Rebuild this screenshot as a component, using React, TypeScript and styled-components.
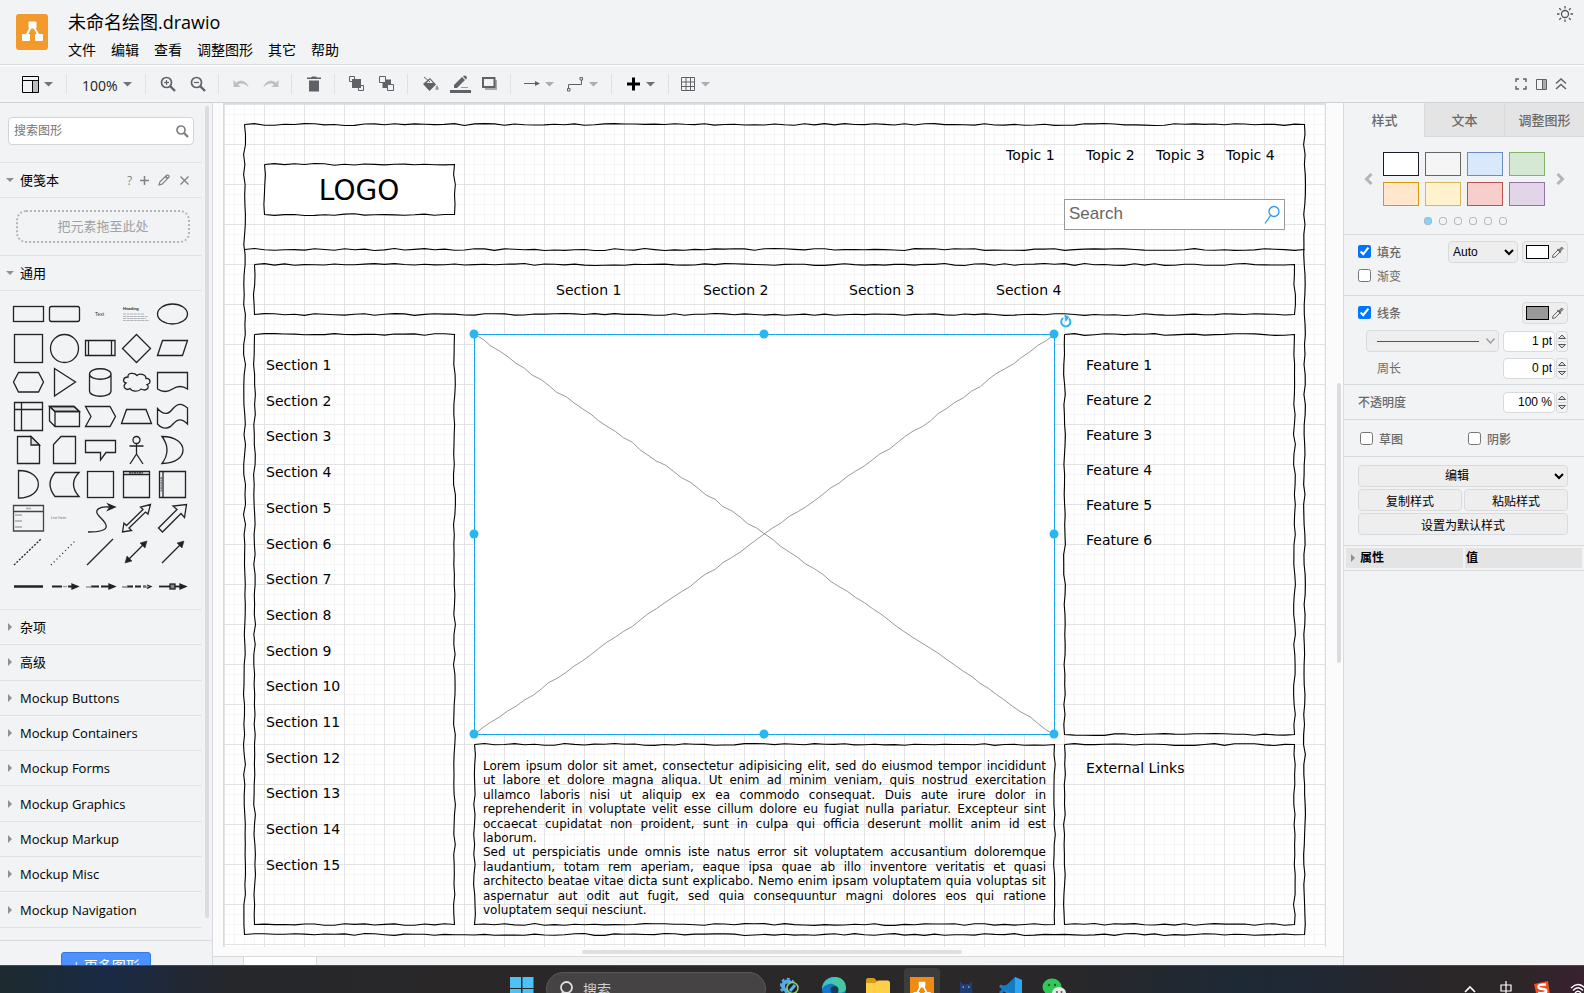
import React from "react";
import styled, { createGlobalStyle, css } from "styled-components";

const UI = `"Open Sans", "Noto Sans CJK SC", sans-serif`;
const ARIAL = `"Liberation Sans", "Noto Sans CJK SC", sans-serif`;
const LINE = "#d8dadd";
const BAR = "#f1f3f4";

const Global = createGlobalStyle`
  *, *::before, *::after { box-sizing: border-box; }
  body { margin: 0; overflow: hidden; font-family: ${UI}; background: ${BAR}; color: #000; }
  button, input, select { font: inherit; margin: 0; }
`;

const Shell = styled.div`
  height: 100vh;
  display: grid;
  grid-template-rows: 66px 37px minmax(0, 1fr) 28px;
`;

/* ---------- header ---------- */
const Header = styled.header`
  display: flex;
  align-items: flex-start;
  gap: 20px;
  padding: 14px 12px 0 16px;
  background: ${BAR};
  border-bottom: 1px solid #fff;
  box-shadow: inset 0 -1px 0 ${LINE};
`;
const AppLogo = styled.svg`
  width: 32px;
  height: 36px;
  flex: none;
`;
const Titles = styled.div`
  flex: 1;
  margin-top: -6px;
`;
const DocTitle = styled.h1`
  margin: 0;
  font-size: 18px;
  line-height: 28px;
  font-weight: 400;
`;
const MenuBar = styled.nav`
  display: flex;
  gap: 15px;
`;
const MenuButton = styled.button`
  padding: 0;
  border: 0;
  background: none;
  font-size: 14px;
  line-height: 28px;
`;
const IconButton = styled.button<{ $w?: number; $h?: number }>`
  display: flex;
  align-items: center;
  justify-content: center;
  width: ${(p) => p.$w ?? 30}px;
  height: ${(p) => p.$h ?? 30}px;
  padding: 0;
  border: 0;
  background: none;
  color: #808386;
  flex: none;
  svg { display: block; }
`;
const ThemeSlot = styled.div`
  margin: -10px -3px 0 0;
`;

/* ---------- toolbar ---------- */
const Toolbar = styled.div`
  display: flex;
  align-items: center;
  padding: 0 13px 0 10px;
  background: ${BAR};
  border-bottom: 1px solid #d0d3d6;
`;
const Group = styled.div<{ $last?: boolean }>`
  display: flex;
  align-items: center;
  height: 20px;
  padding: 0 5px 0 7px;
  border-right: ${(p) => (p.$last ? 0 : 1)}px solid #dfe1e4;
`;
const DropTool = styled(IconButton)`
  justify-content: space-between;
  padding: 0 8px 0 5px;
`;
const ZoomLabel = styled.span`
  font-family: ${UI};
  font-size: 14px;
  color: #222;
  padding: 2px 0 0 3px;
`;
const ToolbarEnd = styled.div`
  display: flex;
  margin-left: auto;
`;

/* ---------- left sidebar ---------- */
const Body = styled.div`
  display: grid;
  grid-template-columns: 213px minmax(0, 1fr) 241px;
  min-height: 0;
`;
const Sidebar = styled.aside`
  display: flex;
  flex-direction: column;
  min-height: 0;
  background: ${BAR};
  border-right: 1px solid ${LINE};
`;
const SidebarScroll = styled.div`
  flex: 1;
  min-height: 0;
  display: flex;
  overflow: hidden;
  justify-content: space-between;
  padding-right: 3px;
`;
const SidebarContent = styled.div`
  width: 202px;
`;
const Thumb = styled.div<{ $top: number; $len: number }>`
  width: 4px;
  height: ${(p) => p.$len}px;
  margin-top: ${(p) => p.$top}px;
  border-radius: 2px;
  background: #dadce0;
`;
const SearchBox = styled.label`
  display: flex;
  align-items: center;
  height: 28px;
  margin: 14px 8px 17px 8px;
  padding: 0 4px 0 5px;
  background: #fff;
  border: 1px solid #d2d4d7;
  border-radius: 4px;
  input {
    flex: 1;
    min-width: 0;
    padding: 0;
    border: 0;
    outline: 0;
    font-size: 12px;
    line-height: 18px;
    background: none;
    &::placeholder { color: #757575; opacity: 1; }
  }
`;
const SectionRow = styled.div`
  display: flex;
  align-items: center;
  height: 35px;
  border-top: 1px solid #e1e3e6;
  padding-right: 8px;
`;
const LibraryList = styled.div`
  display: grid;
  grid-auto-rows: 1fr;
  height: 353px;
  ${SectionRow} { height: auto; }
`;
const SectionTitle = styled.button<{ $medium?: boolean }>`
  flex: 1;
  display: flex;
  align-items: center;
  gap: 6px;
  padding: 0 0 0 6px;
  border: 0;
  background: none;
  font-size: 13px;
  line-height: 20px;
  font-weight: ${(p) => (p.$medium ? 500 : 400)};
  text-align: left;
  white-space: nowrap;
`;
const ScratchTools = styled.div`
  display: flex;
  font-size: 12px;
`;
const ScratchArea = styled.div`
  padding: 12px 12px 12px 16px;
  border-top: 1px solid #e1e3e6;
`;
const DropZone = styled.div`
  height: 33px;
  border: 2px dotted #b4b6b8;
  border-radius: 10px;
  color: #a0a2a4;
  font-size: 13px;
  line-height: 29px;
  text-align: center;
`;
const ShapeGrid = styled.div`
  display: grid;
  grid-template-columns: repeat(5, 36px);
  grid-auto-rows: 34px;
  padding: 6px 10px;
  border-top: 1px solid #e1e3e6;
`;
const ShapeButton = styled.button`
  padding: 0;
  border: 0;
  background: none;
  svg {
    display: block;
    fill: none;
    stroke: #222;
    stroke-width: 1.3;
  }
`;
const SidebarFooter = styled.div`
  flex: none;
  height: 25px;
  overflow: hidden;
  display: flex;
  justify-content: center;
  align-items: flex-start;
  padding-top: 11px;
  border-top: 1px solid ${LINE};
`;
const MoreShapes = styled.button`
  width: 90px;
  height: 28px;
  flex: none;
  padding: 0;
  border: 1px solid #3079ed;
  border-radius: 3px;
  background: #4d90fe;
  color: #fff;
  font-size: 14px;
  line-height: 26px;
`;

/* ---------- canvas ---------- */
const Center = styled.main`
  display: flex;
  flex-direction: column;
  min-width: 0;
  min-height: 0;
  background: #fbfbfb;
`;
const Viewport = styled.div`
  flex: 1;
  min-height: 0;
  display: flex;
  padding: 0 2px 0 10px;
`;
const Page = styled.div`
  position: relative;
  flex: 1;
  min-width: 0;
  overflow: hidden;
  border: solid #dcdcdc;
  border-width: 1px 1px 0;
  background-color: #fff;
  background-image:
    linear-gradient(to right, #e3e3e3 1px, transparent 1px),
    linear-gradient(to bottom, #e3e3e3 1px, transparent 1px),
    linear-gradient(to right, #f6f6f6 1px, transparent 1px),
    linear-gradient(to bottom, #f6f6f6 1px, transparent 1px);
  background-size: 40px 40px, 40px 40px, 10px 10px, 10px 10px;
`;
const VThumb = styled(Thumb)`
  margin-left: 11px;
`;
const HScroll = styled.div`
  height: 9px;
  display: flex;
  justify-content: center;
  align-items: center;
  padding-right: 12px;
  flex: none;
`;
const HThumb = styled.div`
  width: 34%;
  height: 4px;
  border-radius: 2px;
  background: #dfdfdf;
`;
const PageTabs = styled.div`
  flex: none;
  height: 9px;
  padding-left: 30px;
  border-top: 1px solid ${LINE};
  background: ${BAR};
`;
const PageTab = styled.div`
  width: 74px;
  height: 8px;
  background: #fff;
  border: solid ${LINE};
  border-width: 0 1px;
`;
const Strokes = styled.svg`
  position: absolute;
  left: 0;
  top: 0;
  overflow: visible;
  fill: none;
`;
const Label = styled.div<{ $x: number; $y: number }>`
  position: absolute;
  left: ${(p) => p.$x}px;
  top: ${(p) => p.$y}px;
  font-family: "DejaVu Sans", Verdana, sans-serif;
  font-size: 14px;
  line-height: 20px;
  white-space: nowrap;
`;
const LogoLabel = styled(Label)`
  width: 190px;
  text-align: center;
  font-size: 28px;
  line-height: 50px;
`;
const LabelColumn = styled(Label)<{ $h: number }>`
  height: ${(p) => p.$h}px;
  display: flex;
  flex-direction: column;
  justify-content: space-between;
`;
const Paragraph = styled(Label)`
  width: 563px;
  white-space: normal;
  text-align: justify;
  font-size: 12px;
  line-height: 1.2;
  p { margin: 0; }
`;
const MockSearch = styled(Label)`
  display: flex;
  justify-content: space-between;
  width: 221px;
  height: 31px;
  padding: 0 4px;
  border: 1px solid #999;
  background: #fff;
  color: #666;
  font-family: ${ARIAL};
  font-size: 17px;
  line-height: 28px;
`;

/* ---------- format panel ---------- */
const Panel = styled.aside`
  background: ${BAR};
  border-left: 1px solid ${LINE};
  font-family: ${ARIAL};
  font-size: 12px;
  color: #6a6a6a;
  overflow: hidden;
`;
const Tabs = styled.div`
  display: grid;
  grid-template-columns: repeat(3, 1fr);
`;
const Tab = styled.button<{ $active?: boolean }>`
  height: 34px;
  padding: 0;
  border: solid ${LINE};
  border-width: 0 0 1px 1px;
  background: #e4e4e4;
  color: #6a6a6a;
  font-size: 13px;
  font-weight: 500;
  white-space: nowrap;
  ${(p) => p.$active && css`
    background: none;
    border-color: transparent;
  `}
`;
const Section = styled.section<{ $h: number }>`
  height: ${(p) => p.$h}px;
  border-bottom: 1px solid ${LINE};
  padding: 6px 16px 0 14px;
`;
const PresetSection = styled(Section)`
  padding: 15px 14px 0;
`;
const Presets = styled.div`
  display: flex;
  align-items: center;
  justify-content: space-between;
`;
const Swatches = styled.div`
  display: grid;
  grid-template-columns: repeat(4, 36px);
  gap: 6px;
`;
const Swatch = styled.button<{ $fill: string; $line: string }>`
  height: 24px;
  padding: 0;
  border: 1px solid ${(p) => p.$line};
  background: ${(p) => p.$fill};
`;
const Dots = styled.div`
  display: flex;
  justify-content: center;
  gap: 7px;
  padding: 11px 0 0 2px;
`;
const Dot = styled.button<{ $on?: boolean }>`
  width: 8px;
  height: 8px;
  padding: 0;
  border: 1px solid #b5b7b9;
  border-radius: 3px;
  background: ${(p) => (p.$on ? "#80d4ff" : "transparent")};
`;
const Row = styled.div<{ $indent?: number; $gap?: number }>`
  display: flex;
  align-items: center;
  gap: 4px;
  height: 22px;
  padding-left: ${(p) => p.$indent ?? 0}px;
  margin-top: ${(p) => p.$gap ?? 0}px;
`;
const Check = styled.label<{ $w?: number; $bold?: boolean }>`
  display: flex;
  align-items: center;
  gap: 6px;
  width: ${(p) => (p.$w ? `${p.$w}px` : "auto")};
  margin-right: ${(p) => (p.$w ? 0 : "auto")};
  padding-bottom: 2px;
  font-weight: ${(p) => (p.$bold ? 500 : 400)};
  input { width: 13px; height: 13px; }
`;
const FieldName = styled.label<{ $bold?: boolean }>`
  margin-right: auto;
  padding-bottom: 2px;
  font-weight: ${(p) => (p.$bold ? 500 : 400)};
`;
const control = css`
  height: 22px;
  border: 1px solid #d8dadd;
  border-radius: 4px;
  background: #eeeeee;
  color: #000;
  font-size: 12px;
`;
const Select = styled.select<{ $full?: boolean }>`
  ${control}
  width: ${(p) => (p.$full ? "100%" : "70px")};
  padding: 0;
  text-align-last: ${(p) => (p.$full ? "center" : "left")};
`;
const ColorButton = styled.button<{ $c: string }>`
  ${control}
  display: flex;
  align-items: center;
  justify-content: space-between;
  width: 46px;
  padding: 0 3px;
  &::before {
    content: "";
    width: 23px;
    height: 14px;
    border: 1px solid #000;
    background: ${(p) => p.$c};
  }
`;
const LineStyle = styled.button`
  ${control}
  flex: 1;
  display: flex;
  align-items: center;
  justify-content: space-between;
  padding: 0 3px 0 10px;
`;
const Amount = styled.div`
  display: flex;
  gap: 1px;
  input {
    ${control}
    width: 52px;
    height: 21px;
    padding: 0 2px;
    background: #fff;
    font-family: ${ARIAL};
    text-align: right;
  }
`;
const Stepper = styled.div`
  display: flex;
  flex-direction: column;
  width: 12px;
  height: 21px;
  border: 1px solid ${LINE};
  border-radius: 3px;
`;
const Step = styled.button`
  flex: 1;
  display: flex;
  align-items: center;
  justify-content: center;
  padding: 0;
  border: 0;
  background: none;
  & + & { border-top: 1px solid ${LINE}; }
`;
const Action = styled.button`
  ${control}
  flex: 1;
  padding: 0;
`;
const ActionRow = styled.div`
  display: flex;
  gap: 2px;
  margin-top: 2px;
`;
const Properties = styled.table`
  width: 100%;
  border-spacing: 2px;
  border-bottom: 1px solid ${LINE};
  color: #000;
  th {
    height: 20px;
    padding: 0 1px;
    background: #e4e4e4;
    text-align: left;
    font-size: 12px;
    line-height: 18px;
    font-weight: 700;
  }
  th:first-child { width: 117px; }
`;
const PropToggle = styled.button`
  display: flex;
  align-items: center;
  gap: 3px;
  height: 18px;
  padding: 0 0 0 2px;
  border: 0;
  background: none;
`;

/* ---------- taskbar ---------- */
const Taskbar = styled.footer`
  display: flex;
  align-items: flex-start;
  justify-content: space-between;
  overflow: hidden;
  padding-top: 2px;
  border-top: 1px solid #4a4c4e;
  background: linear-gradient(90deg, #1d2a2f 0, #1a2a45 7%, #25272c 14%, #2a2728 30%, #2b2829 60%, #28272a 68%, #1e2936 78%, #1f2835 82%, #292629 90%, #2d2628 96%, #3a2030 100%);
`;
const TaskSide = styled.div`
  flex: 1;
  display: flex;
  justify-content: flex-end;
`;
const TaskApps = styled.div`
  display: flex;
  margin-right: 8px;
`;
const TaskButton = styled.button<{ $active?: boolean }>`
  width: ${(p) => (p.$active ? 36 : 44)}px;
  height: 40px;
  margin: 0 ${(p) => (p.$active ? 4 : 0)}px;
  padding: 9px 0 0;
  display: flex;
  justify-content: center;
  align-items: flex-start;
  border: 0;
  border-radius: 4px;
  background: ${(p) => (p.$active ? "#3d3c3d" : "none")};
`;
const TaskSearch = styled.label`
  display: flex;
  align-items: center;
  gap: 10px;
  width: 220px;
  height: 34px;
  margin: 4px 2px 0;
  padding: 0 12px;
  border: 1px solid #5a5859;
  border-radius: 17px;
  background: #454344;
  input {
    flex: 1;
    min-width: 0;
    padding: 0;
    border: 0;
    outline: 0;
    background: none;
    font-size: 14px;
    &::placeholder { color: #d0d0d0; opacity: 1; }
  }
`;
const TrayButton = styled(TaskButton)`
  width: 36px;
  padding-top: 13px;
  color: #fff;
  &:last-child { margin-right: -12px; }
`;

/* ---------- small drawings ---------- */
const Caret = ({ color = "#707378" }: { color?: string }) => (
  <svg width="9" height="5"><path d="M0 0H9L4.5 4.5Z" fill={color} /></svg>
);
const Fold = ({ open }: { open?: boolean }) => (
  <svg width="8" height="8">
    <path d={open ? "M0 2H8L4 6Z" : "M2 0L6 4L2 8Z"} fill="#8e9093" />
  </svg>
);
const Magnifier = ({ sign }: { sign?: "+" | "-" }) => (
  <svg width="16" height="16" fill="none" stroke="#5f6368">
    <circle cx="6.5" cy="6.5" r="5" strokeWidth="1.7" />
    <path d="M10 10L15 15" strokeWidth="2.4" />
    {sign && <path d="M4 6.5H9" strokeWidth="1.2" />}
    {sign === "+" && <path d="M6.5 4V9" strokeWidth="1.2" />}
  </svg>
);
const Bend = ({ flip }: { flip?: boolean }) => (
  <svg width="16" height="10">
    <g transform={flip ? "matrix(-1 0 0 1 16 0)" : undefined}>
      <path d="M0.500 1V8H7.500L5 5.500C8 3.500 12 4 15.500 8.500C14 2 7.500 0 3.200 3.700Z" fill="#bdc0c3" />
    </g>
  </svg>
);
const Dropper = () => (
  <svg width="13" height="13" fill="none" stroke="#666" strokeWidth="1">
    <path d="M7 4L2 9L1.500 11.500L4 11L9 6Z" />
    <path d="M6.500 3L10 6.500" strokeWidth="1.300" />
    <path d="M8 4.500L9.500 2Q11.500 0.500 12 2.500L9.500 5Z" fill="#999" />
  </svg>
);
const Pencil = () => (
  <svg width="12" height="12" fill="none" stroke="#808386" strokeWidth="1.200">
    <path d="M1 11L1.800 8L8.500 1.300Q10 0.500 11 2Q11.500 3 10.500 3.700L4 10.200Z" />
    <path d="M7.500 2.500L9.500 4.500" strokeWidth="1.800" />
  </svg>
);
const Angle = ({ right }: { right?: boolean }) => (
  <svg width="9" height="12" fill="none" stroke="#b3b5b7" strokeWidth="3">
    <path d={right ? "M1.500 1L6.500 6L1.500 11" : "M7.500 1L2.500 6L7.500 11"} />
  </svg>
);

const Drawio = ({ small }: { small?: boolean }) => (
  <AppLogo
    as="svg"
    viewBox={small ? "2 2 29 30" : "0 0 32 36"}
  >
    <rect width="32" height="36" rx="3" fill={small ? "#f08a10" : "#f29a2b"} />
    <path d="M15 13L10 22M18 13L23 22" stroke="#fff" strokeWidth="2" />
    <rect x="12.500" y="7.500" width="8" height="7" rx="1" fill="#fff" />
    <rect x="6" y="20" width="8" height="7" rx="1" fill="#fff" />
    <rect x="19" y="20" width="8" height="7" rx="1" fill="#fff" />
  </AppLogo>
);
const TaskDrawio = styled.span`
  display: flex;
  ${AppLogo} { width: 24px; height: 25px; }
`;

const tiny = { stroke: "none", fill: "#333", fontFamily: "Liberation Sans", fontSize: 5 } as const;
const shapes: [string, React.ReactNode][] = [
  ["Rectangle", <rect x="3.500" y="9.500" width="30" height="15" />],
  ["Rounded Rectangle", <rect x="3.500" y="9.500" width="30" height="15" rx="2" />],
  ["Text", <text x="13" y="19" {...tiny} fontSize={5}>Text</text>],
  ["Textbox", <g><text x="5" y="13" {...tiny} fontSize={4} fontWeight="700" fill="#134">Heading</text><path d="M5 17H26M5 19.500H30M5 21.500H28M5 23.500H31" stroke="#9a9aa5" strokeWidth=".7" strokeDasharray="3 .6" /></g>],
  ["Ellipse", <ellipse cx="18.500" cy="17" rx="15" ry="10" />],
  ["Square", <rect x="4.500" y="3.500" width="28" height="28" />],
  ["Circle", <circle cx="18.500" cy="17.500" r="14" />],
  ["Process", <path d="M3.500 9.500H33V24.500H3.500ZM6.500 9.500V24.500M29.500 9.500V24.500" />],
  ["Diamond", <path d="M18.500 3.500L32.500 17.500L18.500 31.500L4.500 17.500Z" />],
  ["Parallelogram", <path d="M3.500 24.500L8.500 9.500H33.500L28.500 24.500Z" />],
  ["Hexagon", <path d="M3.500 17L8.500 7.500H28.500L33.500 17L28.500 27H8.500Z" />],
  ["Triangle", <path d="M8.500 3.500L29.500 17L8.500 31Z" />],
  ["Cylinder", <path d="M7.500 9C7.500 2 29 2 29 9V26C29 33 7.500 33 7.500 26ZM7.500 9C7.500 16 29 16 29 9" />],
  ["Cloud", <path d="M10 12C5 12 4 17 8 18C3 22 9 26 12 23.500C14 27 21 27 23 24C29 27 32 22 29 19.500C34 18 32 13 28 13.500C28 9 21 8 19 10.500C16 7 9 8 10 12Z" />],
  ["Document", <path d="M3.500 7.500H33.500V24Q26 19 18.500 24T3.500 24Z" />],
  ["Internal Storage", <path d="M4.500 3.500H32.500V31.500H4.500ZM11.500 3.500V31.500M4.500 10.500H32.500" />],
  ["Cube", <g><path d="M3.500 7.500H28L33.500 12.500H9Z" fill="#ddd" /><path d="M3.500 7.500H28L33.500 12.500V27.500H9L3.500 22ZM3.500 7.500L9 12.500V27.500M9 12.500H33.500" /></g>],
  ["Step", <path d="M3.500 7.500H28L33.500 17.500L28 27.500H3.500L9 17.500Z" />],
  ["Trapezoid", <path d="M3.500 24.500L8.500 10.500H28L33.500 24.500Z" />],
  ["Tape", <path d="M3.500 9.500C10 17 15 15 19 9.500C24 4 28 4 33.500 9V25C28 19.500 24 19.500 19 25C15 30 9 31 3.500 25Z" />],
  ["Note", <g><path d="M7.500 3.500H21L29.500 12V30.500H7.500Z" /><path d="M21 3.500V12H29.500Z" fill="#ddd" /></g>],
  ["Card", <path d="M15 3.500H29.500V30.500H7.500V11.500Z" />],
  ["Callout", <path d="M3.500 7.500H33.500V19.500H24L18.500 27V19.500H3.500Z" />],
  ["Actor", <path d="M18.500 10V21M11.500 13H25.500M18.500 21L12 31M18.500 21L25 31M22 7A3.500 3.500 0 1 1 15 7A3.500 3.500 0 1 1 22 7" />],
  ["Or", <path d="M8 3.500C36 3.500 36 30.500 8 30.500Q18 17 8 3.500Z" />],
  ["And", <path d="M8.500 3.500C35 3.500 35 31 8.500 31Z" />],
  ["Data Storage", <path d="M9 5.500H33Q22 17 33 29.500H9Q-1 17 9 5.500Z" />],
  ["Container", <rect x="5.500" y="4.500" width="26" height="26" />],
  ["Vertical Container", <g><path d="M5.500 4.500H31.500V30.500H5.500ZM5.500 7.500H31.500" /><path d="M11 5.800H25" strokeDasharray="2 .5" /></g>],
  ["Horizontal Container", <g><path d="M5.500 4.500H31.500V30.500H5.500ZM9 4.500V30.500" /><path d="M7.200 10V25" stroke="#668" strokeDasharray="2 .5" /></g>],
  ["List", <g stroke="#444"><path d="M3.500 4.500H33.500V30H3.500ZM3.500 10.500H33.500" /><path d="M16 7.500H21M5 14H12M5 20H12M5 26H12" stroke="#aaa" /></g>],
  ["List Item", <text x="5" y="18" {...tiny} fontSize={4} fill="#777">List Item</text>],
  ["Curve", <g><path d="M6 31C35 31 22 20 17 15C11 9 18 5 27 6" /><path d="M26 3L33 6L26 9L28 6Z" fill="#222" /></g>],
  ["Bidirectional Arrow", <path d="M4.500 31L6 22L8.500 24.500L25 8.500L22.500 6L32.500 3.500L30 13L27.500 11L11 27L13.500 29.500Z" />],
  ["Arrow", <path d="M4.500 27L23 8.500L19 5L32.500 3.500L30.500 16.500L27 12.500L8.500 31Z" />],
  ["Dashed Line", <path d="M4 30L31 4" strokeDasharray="2 1.500" />],
  ["Dotted Line", <path d="M5 30L30 5" strokeDasharray="1 3" />],
  ["Line", <path d="M5 30L31 4" />],
  ["Bidirectional Connector", <g><path d="M9 26L27 8" /><path d="M7 28L9 21L14 26ZM29 6L27 13L22 8Z" fill="#222" strokeWidth=".5" /></g>],
  ["Directional Connector", <g><path d="M8 28L27 9" /><path d="M30 6L28 13L23 8Z" fill="#222" strokeWidth=".5" /></g>],
  ["Link", <path d="M4 17.500H33" strokeWidth="2.500" />],
  ["Connector with Label", <g><path d="M6 17.500H16M22 17.500H28" strokeWidth="1.800" /><path d="M17 17.500H21" stroke="#999" /><path d="M26 15L32 17.500L26 20Z" fill="#222" /></g>],
  ["Connector with 2 Labels", <g><path d="M9 17.500H28" strokeWidth="1.800" strokeDasharray="8 2" /><path d="M4 18H10" stroke="#888" /><path d="M27 15L33 17.500L27 20Z" fill="#222" /></g>],
  ["Connector with 3 Labels", <g><path d="M9 17.500H28" strokeWidth="1.800" strokeDasharray="6 2" /><path d="M4 18H10M25 18H32" stroke="#888" /><path d="M29 16L33 17.500L29 19.500" /></g>],
  ["Connector with Symbol", <g><path d="M5 17.500H28" strokeWidth="1.800" /><rect x="16" y="15" width="5" height="5" fill="#888" /><path d="M26 15L32 17.500L26 20Z" fill="#222" /></g>],
];

/* Hand-drawn outline: each side is cut into short steps that drift off the straight line. */
function wobble(points: [number, number][], seed: number) {
  let s = seed;
  const rnd = () => {
    s = (s * 16807) % 2147483647;
    return s / 2147483647;
  };
  let d = `M${points[0][0]} ${points[0][1]}`;
  for (let i = 1; i < points.length; i++) {
    const [x0, y0] = points[i - 1];
    const [x1, y1] = points[i];
    const len = Math.hypot(x1 - x0, y1 - y0);
    const n = Math.max(2, Math.round(len / 10));
    const nx = -(y1 - y0) / len;
    const ny = (x1 - x0) / len;
    for (let k = 1; k < n; k++) {
      const off = (rnd() - 0.5) * 2;
      d += `L${(x0 + ((x1 - x0) * k) / n + nx * off).toFixed(1)} ${(y0 + ((y1 - y0) * k) / n + ny * off).toFixed(1)}`;
    }
    d += `L${x1} ${y1}`;
  }
  return d;
}
const box = (x: number, y: number, w: number, h: number, seed: number) =>
  wobble([[x, y], [x + w, y], [x + w, y + h], [x, y + h], [x, y]], seed);

const frames = [
  box(20.5, 20.5, 1060, 810, 4211),
  wobble([[20.5, 145.5], [1080.5, 145.5]], 917),
  box(30.5, 160.5, 1040, 50, 7753),
  box(30.5, 230.5, 200, 590, 3391),
  box(840.5, 230.5, 230, 400, 6127),
  box(250.5, 640.5, 580, 180, 2719),
  box(840.5, 640.5, 230, 180, 9241),
];
const handles = [250, 540, 830].flatMap((x) => [230, 430, 630].map((y) => [x, y])).filter(([x, y]) => !(x === 540 && y === 430));

const presets = [
  ["#ffffff", "#1a1a28"], ["#f5f5f5", "#666666"], ["#dae8fc", "#6c8ebf"], ["#d5e8d4", "#82b366"],
  ["#ffe6cc", "#d79b00"], ["#fff2cc", "#d6b656"], ["#f8cecc", "#b85450"], ["#e1d5e7", "#9673a6"],
];
const cjkLibraries = ["杂项", "高级"];
const mockLibraries = ["Buttons", "Containers", "Forms", "Graphics", "Markup", "Misc", "Navigation", "Text"];
const count = (name: string, n: number) => Array.from({ length: n }, (_, i) => `${name} ${i + 1}`);

const AmountField = ({ id, value, label }: { id: string; value: string; label: string }) => (
  <Amount>
    <input id={id} aria-label={label} defaultValue={value} />
    <Stepper>
      <Step aria-label="增加"><svg width="8" height="5" fill="#ddd" stroke="#555"><path d="M.5 4.500L4 1L7.500 4.500Z" /></svg></Step>
      <Step aria-label="减少"><svg width="8" height="5" fill="#ddd" stroke="#555"><path d="M.5 .5L4 4L7.500 .5Z" /></svg></Step>
    </Stepper>
  </Amount>
);

function HeaderBar() {
  return (
    <Header>
      <Drawio />
      <Titles>
        <DocTitle>未命名绘图.drawio</DocTitle>
        <MenuBar>
          {["文件", "编辑", "查看", "调整图形", "其它", "帮助"].map((m) => <MenuButton key={m}>{m}</MenuButton>)}
        </MenuBar>
      </Titles>
      <ThemeSlot>
        <IconButton $w={20} $h={20} aria-label="外观">
          <svg width="18" height="18" fill="none" stroke="#555" strokeWidth="1.300">
            <circle cx="9" cy="9" r="3.500" />
            <path d="M9 1V3.500M9 14.500V17M1 9H3.500M14.500 9H17M3.300 3.300L5 5M13 13L14.700 14.700M3.300 14.700L5 13M13 5L14.700 3.300" />
          </svg>
        </IconButton>
      </ThemeSlot>
    </Header>
  );
}

function ToolbarRow() {
  return (
    <Toolbar>
      <Group>
        <DropTool $w={44} aria-label="视图">
          <svg width="17" height="17" fill="none" stroke="#000"><path d="M11 5H16V16H11Z" fill="#bbb" stroke="none" /><path d="M.5 .5H16.500V16.500H.5ZM.5 4.500H16.500M10.500 4.500V16.500" /></svg>
          <Caret />
        </DropTool>
      </Group>
      <Group>
        <DropTool $w={66} aria-label="缩放"><ZoomLabel>100%</ZoomLabel><Caret /></DropTool>
      </Group>
      <Group>
        <IconButton aria-label="放大"><Magnifier sign="+" /></IconButton>
        <IconButton aria-label="缩小"><Magnifier sign="-" /></IconButton>
      </Group>
      <Group>
        <IconButton aria-label="撤销"><Bend /></IconButton>
        <IconButton aria-label="重做"><Bend flip /></IconButton>
      </Group>
      <Group>
        <IconButton aria-label="删除"><svg width="14" height="16" fill="#5f6368"><path d="M0 1.500H4L5 .5H9L10 1.500H14V3H0ZM2 4.500H12V15.500H2Z" /></svg></IconButton>
      </Group>
      <Group>
        <IconButton aria-label="置于前面"><svg width="16" height="16" fill="none" stroke="#5f6368"><path d="M3 3H12V12H3Z" fill="#5f6368" stroke="none" /><path d="M5.500 .5H.5V5.500H3M5.500 .5V3M9.500 12V14.500H14.500V9.500H12" /></svg></IconButton>
        <IconButton aria-label="置于后面"><svg width="16" height="16" fill="none" stroke="#5f6368"><path d="M3.500 3.500H12V12H3.500Z" fill="#5f6368" stroke="none" /><path d="M.5 .5H6.500V6.500H.5ZM8.500 8.500H14.500V14.500H8.500Z" fill="#f1f3f4" /></svg></IconButton>
      </Group>
      <Group>
        <IconButton aria-label="填充颜色"><svg width="17" height="16" fill="#5f6368"><path d="M1 8L8 2L14 8.500L7.500 15Z" /><path d="M4.500 7L8 3.500L11 7Z" fill="#f1f3f4" /><path d="M2 1L8 6" stroke="#5f6368" /><path d="M15 9Q18.500 14 15 14T15 9Z" opacity=".6" /></svg></IconButton>
        <IconButton aria-label="线条颜色"><svg width="21" height="18" fill="#5f6368"><path d="M4 13V10L12 2L15 5L7 13ZM13 1.500Q14.500 -.5 16.500 1.500Q17.500 3 16 4.500Z" /><path d="M11 12H18V13H11Z" opacity=".6" /><path d="M0 15H21V18H0Z" /></svg></IconButton>
        <IconButton aria-label="阴影"><svg width="16" height="14"><path d="M3 3H15V13H3Z" fill="#aaa" /><path d="M1 1H12.500V10H1Z" fill="#f1f3f4" stroke="#5f6368" strokeWidth="2" /></svg></IconButton>
      </Group>
      <Group>
        <DropTool $w={44} aria-label="连接"><svg width="17" height="10"><path d="M1 4.500H14" stroke="#5f6368" /><path d="M12 2L17 4.500L12 7Z" fill="#5f6368" /></svg><Caret color="#aaacaf" /></DropTool>
        <DropTool $w={44} aria-label="航点"><svg width="16" height="16" fill="none" stroke="#5f6368"><path d="M1.500 13V8.500H14.500V4M.5 12.500H3V15H.5ZM13 1.500H15.500V4H13Z" /></svg><Caret color="#aaacaf" /></DropTool>
      </Group>
      <Group>
        <DropTool $w={44} aria-label="插入"><svg width="17" height="14"><path d="M9.500 .5V13.500M3 7H16" stroke="#000" strokeWidth="3" /></svg><Caret /></DropTool>
      </Group>
      <Group $last>
        <DropTool $w={42} aria-label="表格"><svg width="14" height="14" fill="none" stroke="#5f6368"><path d="M.5 .5H13.500V13.500H.5ZM.5 5H13.500M.5 9.500H13.500M5 .5V13.500M9.500 .5V13.500" /></svg><Caret color="#aaacaf" /></DropTool>
      </Group>
      <ToolbarEnd>
        <IconButton $w={20} aria-label="全屏"><svg width="12" height="12" fill="none" stroke="#5f6368" strokeWidth="1.500"><path d="M1 4V1H4M8 1H11V4M11 8V11H8M4 11H1V8" /></svg></IconButton>
        <IconButton $w={20} aria-label="格式"><svg width="11" height="11"><path d="M7 1H10V10H7Z" fill="#aaa" /><path d="M.5 .5H10.500V10.500H.5ZM6.500 .5V10.500" fill="none" stroke="#5f6368" /></svg></IconButton>
        <IconButton $w={20} aria-label="收起"><svg width="12" height="12" fill="none" stroke="#5f6368" strokeWidth="1.500"><path d="M1 5.500L6 1L11 5.500M1 11L6 6.500L11 11" /></svg></IconButton>
      </ToolbarEnd>
    </Toolbar>
  );
}

function ShapeSidebar() {
  return (
    <Sidebar>
      <SidebarScroll>
        <SidebarContent>
          <SearchBox>
            <input placeholder="搜索图形" aria-label="搜索图形" />
            <svg width="13" height="13" fill="none" stroke="#7d8084"><circle cx="5" cy="5" r="4" strokeWidth="1.700" /><path d="M8 8L12 12" strokeWidth="2.400" /></svg>
          </SearchBox>
          <SectionRow>
            <SectionTitle><Fold open />便笺本</SectionTitle>
            <ScratchTools>
              <IconButton $w={9} $h={20}>?</IconButton>
              <IconButton $w={20} $h={20} aria-label="添加"><svg width="9" height="9"><path d="M4.500 0V9M0 4.500H9" stroke="#808386" strokeWidth="1.500" /></svg></IconButton>
              <IconButton $w={20} $h={20} aria-label="编辑"><Pencil /></IconButton>
              <IconButton $w={20} $h={20} aria-label="关闭"><svg width="9" height="9"><path d="M.5 .5L8.500 8.500M8.500 .5L.5 8.500" stroke="#808386" strokeWidth="1.300" /></svg></IconButton>
            </ScratchTools>
          </SectionRow>
          <ScratchArea><DropZone>把元素拖至此处</DropZone></ScratchArea>
          <SectionRow><SectionTitle><Fold open />通用</SectionTitle></SectionRow>
          <ShapeGrid>
            {shapes.map(([name, art]) => (
              <ShapeButton key={name} aria-label={name}><svg width="36" height="34">{art}</svg></ShapeButton>
            ))}
          </ShapeGrid>
          <LibraryList>
            {cjkLibraries.map((l) => (
              <SectionRow key={l}><SectionTitle><Fold />{l}</SectionTitle></SectionRow>
            ))}
            {mockLibraries.map((l) => (
              <SectionRow key={l}><SectionTitle $medium><Fold />Mockup {l}</SectionTitle></SectionRow>
            ))}
          </LibraryList>
        </SidebarContent>
        <Thumb $top={3} $len={812} />
      </SidebarScroll>
      <SidebarFooter><MoreShapes>+ 更多图形</MoreShapes></SidebarFooter>
    </Sidebar>
  );
}

function Diagram() {
  return (
    <Page>
      <Strokes width="1100" height="840">
        <g stroke="#000" strokeWidth="1.100">
          {frames.map((d, i) => <path key={i} d={d} />)}
          <path d={box(40.5, 60.5, 190, 50, 5417)} fill="#fff" />
        </g>
        <rect x="250.500" y="230.500" width="580" height="400" fill="#fff" stroke="#999" />
        <g stroke="#999">
          <path d={wobble([[250.5, 230.5], [830.5, 630.5]], 613)} />
          <path d={wobble([[250.5, 630.5], [830.5, 230.5]], 829)} />
        </g>
      </Strokes>
      <LogoLabel $x={40} $y={62}>LOGO</LogoLabel>
      {[782, 862, 932, 1002].map((x, i) => <Label key={x} $x={x} $y={41}>Topic {i + 1}</Label>)}
      {[332, 479, 625, 772].map((x, i) => <Label key={x} $x={x} $y={176}>Section {i + 1}</Label>)}
      <MockSearch $x={840} $y={95}>
        Search
        <svg width="16" height="29" fill="none" stroke="#2a97f5" strokeWidth="1.300"><circle cx="10" cy="11.500" r="5" /><path d="M6.500 15.500L1 23.500" /></svg>
      </MockSearch>
      <LabelColumn $x={42} $y={251} $h={520}>{count("Section", 15).map((t) => <span key={t}>{t}</span>)}</LabelColumn>
      <LabelColumn $x={862} $y={251} $h={195}>{count("Feature", 6).map((t) => <span key={t}>{t}</span>)}</LabelColumn>
      <Paragraph $x={259} $y={655}>
        <p>Lorem ipsum dolor sit amet, consectetur adipisicing elit, sed do eiusmod tempor incididunt ut labore et dolore magna aliqua. Ut enim ad minim veniam, quis nostrud exercitation ullamco laboris nisi ut aliquip ex ea commodo consequat. Duis aute irure dolor in reprehenderit in voluptate velit esse cillum dolore eu fugiat nulla pariatur. Excepteur sint occaecat cupidatat non proident, sunt in culpa qui officia deserunt mollit anim id est laborum.</p>
        <p>Sed ut perspiciatis unde omnis iste natus error sit voluptatem accusantium doloremque laudantium, totam rem aperiam, eaque ipsa quae ab illo inventore veritatis et quasi architecto beatae vitae dicta sunt explicabo. Nemo enim ipsam voluptatem quia voluptas sit aspernatur aut odit aut fugit, sed quia consequuntur magni dolores eos qui ratione voluptatem sequi nesciunt.</p>
      </Paragraph>
      <Label $x={862} $y={654}>External Links</Label>
      <Strokes width="1100" height="840">
        <rect x="250.500" y="230.500" width="580" height="400" stroke="#00a8ff" strokeDasharray="6 1" />
        <g fill="#29b6f2">{handles.map(([x, y]) => <circle key={`${x}-${y}`} cx={x} cy={y} r="4.500" />)}</g>
        <path d="M839.200 214A4.600 4.600 0 1 0 845 214.500" stroke="#29b6f2" strokeWidth="2" />
        <path d="M840.500 210.500L845.500 213L841.500 218Z" fill="#29b6f2" />
      </Strokes>
    </Page>
  );
}

function FormatPanel() {
  return (
    <Panel>
      <Tabs><Tab $active>样式</Tab><Tab>文本</Tab><Tab>调整图形</Tab></Tabs>
      <PresetSection $h={98}>
        <Presets>
          <IconButton $w={20} aria-label="上一页"><Angle /></IconButton>
          <Swatches>{presets.map(([f, l]) => <Swatch key={f} $fill={f} $line={l} aria-label={f} />)}</Swatches>
          <IconButton $w={20} aria-label="下一页"><Angle right /></IconButton>
        </Presets>
        <Dots>{[1, 2, 3, 4, 5, 6].map((n) => <Dot key={n} $on={n === 1} aria-label={`${n}`} />)}</Dots>
      </PresetSection>
      <Section $h={61}>
        <Row>
          <Check $bold><input type="checkbox" defaultChecked />填充</Check>
          <Select aria-label="填充样式"><option>Auto</option></Select>
          <ColorButton $c="#fff" aria-label="填充颜色"><Dropper /></ColorButton>
        </Row>
        <Row $gap={2}><Check><input type="checkbox" />渐变</Check></Row>
      </Section>
      <Section $h={89}>
        <Row>
          <Check $bold><input type="checkbox" defaultChecked />线条</Check>
          <ColorButton $c="#999" aria-label="线条颜色"><Dropper /></ColorButton>
        </Row>
        <Row $indent={8} $gap={6}>
          <LineStyle aria-label="线条样式">
            <svg width="102" height="3"><path d="M0 1.500H102" stroke="#555" /></svg>
            <svg width="9" height="6"><path d="M.5 .5L4.500 5L8.500 .5" fill="none" stroke="#999" strokeWidth="1.300" /></svg>
          </LineStyle>
          <AmountField id="line-width" label="线宽" value="1 pt" />
        </Row>
        <Row $indent={19} $gap={5}>
          <FieldName htmlFor="perimeter">周长</FieldName>
          <AmountField id="perimeter" label="周长" value="0 pt" />
        </Row>
      </Section>
      <Section $h={35}>
        <Row>
          <FieldName $bold htmlFor="opacity">不透明度</FieldName>
          <AmountField id="opacity" label="不透明度" value="100 %" />
        </Row>
      </Section>
      <Section $h={37}>
        <Row $indent={2} $gap={2}>
          <Check $w={104} $bold><input type="checkbox" />草图</Check>
          <Check $bold><input type="checkbox" />阴影</Check>
        </Row>
      </Section>
      <Section $h={89}>
        <ActionRow><Select $full aria-label="编辑"><option>编辑</option></Select></ActionRow>
        <ActionRow><Action>复制样式</Action><Action>粘贴样式</Action></ActionRow>
        <ActionRow><Action>设置为默认样式</Action></ActionRow>
      </Section>
      <Properties>
        <thead><tr><th scope="col"><PropToggle><Fold />属性</PropToggle></th><th scope="col">值</th></tr></thead>
      </Properties>
    </Panel>
  );
}

function WindowsTaskbar() {
  return (
    <Taskbar>
      <TaskSide />
      <TaskApps>
        <TaskButton aria-label="开始"><svg width="24" height="24" fill="#4cc2f7"><path d="M0 0H11V11H0ZM12.500 0H23.500V11H12.500ZM0 12H11V23H0ZM12.500 12H23.500V23H12.500Z" /></svg></TaskButton>
        <TaskSearch>
          <svg width="14" height="16" fill="none" stroke="#e0e0e0" strokeWidth="1.800"><circle cx="7.500" cy="6.500" r="5.500" /><path d="M4 11L1 15" /></svg>
          <input placeholder="搜索" aria-label="搜索" />
        </TaskSearch>
        <TaskButton aria-label="设置"><svg width="20" height="20" fill="none"><circle cx="7.500" cy="9" r="4.500" stroke="#58a9e8" strokeWidth="4" /><circle cx="7.500" cy="9" r="7.200" stroke="#58a9e8" strokeWidth="2" strokeDasharray="3 2.500" /><circle cx="12.500" cy="11" r="5.500" fill="#222" stroke="#8bd06c" strokeWidth="1.500" /><path d="M10 14L15 8" stroke="#5ab4f0" strokeWidth="3" /></svg></TaskButton>
        <TaskButton aria-label="Edge"><svg width="24" height="24"><circle cx="12" cy="12" r="12" fill="#1478c8" /><path d="M0 12C1 -4 24 -4 24 11C24 17 14 17 14 13C16 9 11 6 7 7Q2 8 0 12Z" fill="#46c8a4" /><path d="M0 12C1 2 10 -1 16 1C10 1 2 5 0 12Z" fill="#35b9e8" /><circle cx="12.500" cy="13" r="4" fill="#123c5c" /></svg></TaskButton>
        <TaskButton aria-label="文件资源管理器"><svg width="24" height="24"><path d="M0 3Q0 1 2 1H8L11 4V8H0Z" fill="#d99a16" /><path d="M0 6H9L12 3.500H22Q24 3.500 24 6V24H0Z" fill="#ffcf48" /><path d="M6 17H18V24H6Z" fill="#b98a20" /></svg></TaskButton>
        <TaskButton $active aria-label="draw.io"><TaskDrawio><Drawio small /></TaskDrawio></TaskButton>
        <TaskButton aria-label="猫"><svg width="16" height="22"><path d="M2 4L5 7H11L14 4V12L15 22H1L2 12Z" fill="#1f3d73" /><path d="M4.500 10H6M10 10H11.500" stroke="#6fb3ff" strokeWidth="1.500" /></svg></TaskButton>
        <TaskButton aria-label="VS Code"><svg width="24" height="24"><path d="M17 0L24 3V21L17 24L1 9.500L3 7.500L17 18Z" fill="#1f8ad2" /><path d="M17 0L24 3V21L17 24Z" fill="#2ea6ee" /><path d="M17 6V18L1 9.500M17 6L3 17L1 15L17 0Z" fill="#147cc4" /></svg></TaskButton>
        <TaskButton aria-label="微信"><svg width="24" height="24"><ellipse cx="10" cy="10" rx="9.500" ry="8.500" fill="#33c759" /><ellipse cx="17" cy="16" rx="7" ry="6" fill="#e8e8e8" /><circle cx="7" cy="8" r="1.200" fill="#145c28" /><circle cx="13" cy="8" r="1.200" fill="#145c28" /><circle cx="15" cy="15" r="1" fill="#555" /><circle cx="19.500" cy="15" r="1" fill="#555" /></svg></TaskButton>
      </TaskApps>
      <TaskSide>
        <TrayButton aria-label="显示隐藏的图标"><svg width="12" height="16" fill="none" stroke="#fff" strokeWidth="1.600"><path d="M1 11L6 6L11 11" /></svg></TrayButton>
        <TrayButton aria-label="输入法"><svg width="12" height="16" fill="none" stroke="#fff" strokeWidth="1.200"><path d="M1 4H11V10H1ZM6 0V16" /></svg></TrayButton>
        <TrayButton aria-label="搜狗"><svg width="16" height="16"><path d="M0 3L14 0L16 14L3 16Z" fill="#f04e23" /><path d="M12 3.500Q4 3 4.500 6Q5 8 9 8Q13 8.500 12 11Q10 13 4 12" fill="none" stroke="#fff" strokeWidth="2.500" /></svg></TrayButton>
        <TrayButton aria-label="网络"><svg width="16" height="16" fill="none" stroke="#fff" strokeWidth="1.300"><path d="M1 7Q8 0 15 7M3 9.500Q8 4 13 9.500M5 12Q8 8.500 11 12" /></svg></TrayButton>
      </TaskSide>
    </Taskbar>
  );
}

export default function App() {
  return (
    <>
      <Global />
      <Shell>
        <HeaderBar />
        <ToolbarRow />
        <Body>
          <ShapeSidebar />
          <Center>
            <Viewport><Diagram /><VThumb $top={280} $len={280} /></Viewport>
            <HScroll><HThumb /></HScroll>
            <PageTabs><PageTab /></PageTabs>
          </Center>
          <FormatPanel />
        </Body>
        <WindowsTaskbar />
      </Shell>
    </>
  );
}
